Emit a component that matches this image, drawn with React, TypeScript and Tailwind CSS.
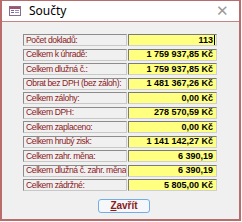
import React from "react";

const rows: [string, string][] = [
  ["Počet dokladů:", "113"],
  ["Celkem k úhradě:", "1 759 937,85 Kč"],
  ["Celkem dlužná č.:", "1 759 937,85 Kč"],
  ["Obrat bez DPH (bez záloh):", "1 481 367,26 Kč"],
  ["Celkem zálohy:", "0,00 Kč"],
  ["Celkem DPH:", "278 570,59 Kč"],
  ["Celkem zaplaceno:", "0,00 Kč"],
  ["Celkem hrubý zisk:", "1 141 142,27 Kč"],
  ["Celkem zahr. měna:", "6 390,19"],
  ["Celkem dlužná č. zahr. měna:", "6 390,19"],
  ["Celkem zádržné:", "5 805,00 Kč"],
];

export default function App() {
  return (
    <div className="w-[242px] h-[222px] bg-white">
      <div className="w-[241px] h-[221px] flex flex-col border-2 border-t border-[#b86c6c] bg-white">
        <div className="h-[20px] flex items-center bg-white pl-[7px] pr-[10px]">
          <svg width="12" height="10" viewBox="0 0 12 10" className="shrink-0">
            <rect x="0.5" y="0.5" width="11" height="9" fill="#fff" stroke="#8a6b8a" />
            <rect x="1" y="1" width="10" height="2" fill="#a8506a" />
            <rect x="2" y="4" width="3" height="1" fill="#6b6bb0" />
            <rect x="6" y="4" width="4" height="1" fill="#9090c0" />
            <rect x="2" y="6" width="3" height="1" fill="#6b6bb0" />
            <rect x="6" y="6" width="4" height="1" fill="#9090c0" />
          </svg>
          <span
            className="ml-[8px] text-[12px] text-black leading-none"
            style={{ fontFamily: "'Noto Sans', 'Open Sans', sans-serif" }}
          >
            Součty
          </span>
          <span className="ml-auto text-[#9a9a9a] text-[15px] leading-none font-light" style={{ fontFamily: "'DejaVu Sans', sans-serif" }}>
            ✕
          </span>
        </div>
        <div className="flex-1 bg-[#f0f0f0] border-t border-[#c48484] flex flex-col pt-[12px] pl-[21px]">
          <div className="flex flex-col gap-[2.5px]" style={{ fontFamily: "'Liberation Sans', Arial, sans-serif" }}>
            {rows.map(([l, v], i) => (
              <div key={i} className="flex h-[12px]">
                <div className="w-[104px] h-full border border-t-[#8c8c8c] border-l-[#8c8c8c] border-b-[#c8c8c8] border-r-[#c8c8c8] bg-[#f0f0f0] flex items-center pl-[2px] text-[8.6px] tracking-[-0.4px] leading-none text-[#8b1a1a] whitespace-nowrap overflow-hidden">
                  {l}
                </div>
                <div className="ml-[1px] w-[89px] h-full border border-t-[#7a7a7a] border-l-[#7a7a7a] border-b-[#d0d0d0] border-r-[#d0d0d0] bg-[#ffff80] flex items-center justify-end pr-[3px] text-[9px] leading-none font-bold text-black whitespace-nowrap">
                  {v}
                  {i === 0 && <span className="inline-block w-px h-[10px] bg-black ml-[1px] -mr-[2px]" />}
                </div>
              </div>
            ))}
          </div>
          <div className="flex pl-[75px] mt-[8px]">
            <div
              className="w-[52px] h-[14px] rounded-[3px] border border-[#72aee6] bg-[#f5f7fa] flex items-center justify-center text-[10px] leading-none font-bold text-[#8b1a1a]"
              style={{ fontFamily: "'Liberation Sans', Arial, sans-serif" }}
            >
              <span className="underline">Z</span>avřít
            </div>
          </div>
        </div>
      </div>
    </div>
  );
}
